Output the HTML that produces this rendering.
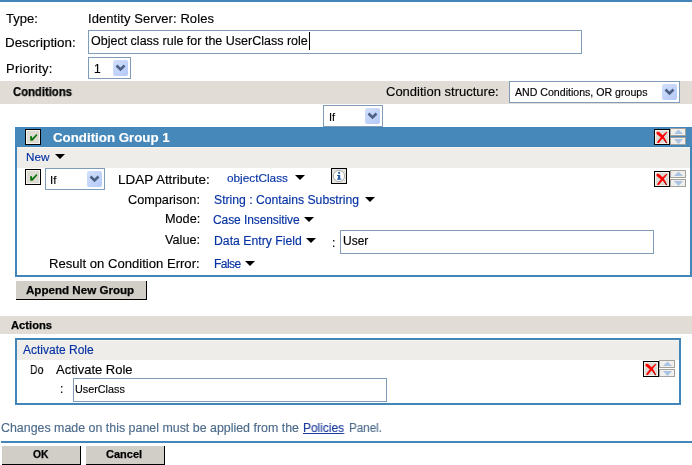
<!DOCTYPE html>
<html><head><meta charset="utf-8"><style>
html,body{margin:0;padding:0;}
body{width:692px;height:465px;overflow:hidden;position:relative;background:#fff;font-family:"Liberation Sans",sans-serif;}
.t{position:absolute;line-height:1;white-space:pre;font-family:"Liberation Sans",sans-serif;will-change:transform;-webkit-text-stroke:0.15px currentColor;}
svg{display:block}
</style></head><body>
<div style="position:absolute;left:0px;top:0px;width:692px;height:2px;box-sizing:border-box;background:#4486b9"></div>
<div class="t" style="left:6px;top:12px;font-size:13px;font-weight:normal;color:#000;">Type:</div>
<div class="t" style="left:88px;top:12px;font-size:13px;font-weight:normal;color:#000;letter-spacing:0.08px">Identity Server: Roles</div>
<div class="t" style="left:5px;top:36px;font-size:13px;font-weight:normal;color:#000;transform:scaleX(1.03);transform-origin:left top;">Description:</div>
<div style="position:absolute;left:88px;top:30px;width:494px;height:24px;box-sizing:border-box;border:1px solid #7f9db9;background:#fff"></div>
<div class="t" style="left:91px;top:35px;font-size:12.5px;font-weight:normal;color:#000;">Object class rule for the UserClass role</div>
<div style="position:absolute;left:309px;top:32px;width:1px;height:18px;box-sizing:border-box;background:#000"></div>
<div class="t" style="left:6px;top:62px;font-size:13px;font-weight:normal;color:#000;letter-spacing:0.3px">Priority:</div>
<div style="position:absolute;left:88px;top:57px;width:43px;height:22px;box-sizing:border-box;border:1px solid #7f9db9;background:#fff"></div>
<div class="t" style="left:94px;top:63px;font-size:12px;font-weight:normal;color:#000;">1</div>
<svg style="position:absolute;left:113px;top:60px" width="15" height="16" viewBox="0 0 15 16"><defs><linearGradient id="g11360" x1="0" y1="0" x2="1" y2="1"><stop offset="0" stop-color="#d3e0fd"/><stop offset="1" stop-color="#b3c9f7"/></linearGradient></defs><rect x="0" y="0" width="15" height="16" rx="2" fill="url(#g11360)"/><path d="M3.5 5.5L7.5 9.5L11.5 5.5" fill="none" stroke="#4d6185" stroke-width="2.6"/></svg>
<div style="position:absolute;left:0px;top:81px;width:692px;height:23px;box-sizing:border-box;background:#e1ddd6"></div>
<div class="t" style="left:13px;top:86px;font-size:12px;font-weight:bold;color:#000;-webkit-text-stroke:0.25px #000;transform:scaleX(0.94);transform-origin:left top;">Conditions</div>
<div class="t" style="left:386px;top:85px;font-size:13px;font-weight:normal;color:#000;">Condition structure:</div>
<div style="position:absolute;left:509px;top:81px;width:171px;height:22px;box-sizing:border-box;border:1px solid #7f9db9;background:#fff"></div>
<div class="t" style="left:515px;top:87px;font-size:10.6px;font-weight:normal;color:#000;">AND Conditions, OR groups</div>
<svg style="position:absolute;left:662px;top:84px" width="15" height="16" viewBox="0 0 15 16"><defs><linearGradient id="g66284" x1="0" y1="0" x2="1" y2="1"><stop offset="0" stop-color="#d3e0fd"/><stop offset="1" stop-color="#b3c9f7"/></linearGradient></defs><rect x="0" y="0" width="15" height="16" rx="2" fill="url(#g66284)"/><path d="M3.5 5.5L7.5 9.5L11.5 5.5" fill="none" stroke="#4d6185" stroke-width="2.6"/></svg>
<div style="position:absolute;left:323px;top:105px;width:60px;height:22px;box-sizing:border-box;border:1px solid #7f9db9;background:#fff"></div>
<div class="t" style="left:329px;top:112px;font-size:11px;font-weight:normal;color:#000;">If</div>
<svg style="position:absolute;left:365px;top:108px" width="15" height="16" viewBox="0 0 15 16"><defs><linearGradient id="g365108" x1="0" y1="0" x2="1" y2="1"><stop offset="0" stop-color="#d3e0fd"/><stop offset="1" stop-color="#b3c9f7"/></linearGradient></defs><rect x="0" y="0" width="15" height="16" rx="2" fill="url(#g365108)"/><path d="M3.5 5.5L7.5 9.5L11.5 5.5" fill="none" stroke="#4d6185" stroke-width="2.6"/></svg>
<div style="position:absolute;left:15px;top:127px;width:677px;height:150px;box-sizing:border-box;border:2px solid #4285b8;border-top:0"></div>
<div style="position:absolute;left:15px;top:127px;width:677px;height:20px;box-sizing:border-box;background:#4688ba"></div>
<div style="position:absolute;left:15px;top:127px;width:677px;height:1px;box-sizing:border-box;background:#4285b8"></div>
<div style="position:absolute;left:15px;top:146px;width:677px;height:1px;box-sizing:border-box;background:#4285b8"></div>
<svg style="position:absolute;left:25px;top:129px" width="16" height="16" viewBox="0 0 16 16"><rect x="0.5" y="0.5" width="15" height="15" fill="#dedbd3" stroke="#000"/><rect x="1.5" y="1.5" width="13" height="13" fill="none" stroke="#f6f3ec" stroke-width="1"/><path d="M5 7.2H7.1V9.4L11.2 5.2L12.2 5.4V6.6L7.6 11.8H5.4Z" fill="#0a720a"/></svg>
<div class="t" style="left:53px;top:131px;font-size:13.3px;font-weight:bold;color:#fff;">Condition Group 1</div>
<svg style="position:absolute;left:654px;top:129px" width="16" height="16" viewBox="0 0 16 16"><rect x="0.5" y="0.5" width="15" height="15" fill="#dcdad4" stroke="#000"/><rect x="1.5" y="1.5" width="13" height="13" fill="none" stroke="#f6f3ec" stroke-width="1"/><path d="M2.4 4.3C2.3 3.2 3.4 2.6 4.6 2.9C6 3.3 7.5 5 9 6.8C10.6 8.8 12 11 13.1 13.9L12.3 14.2C10.8 12 9 10.2 7.2 8.6C5.6 7.2 2.6 5.6 2.4 4.3Z" fill="#f00"/><path d="M13.4 3.2L12.7 2.7C10.5 4.2 8.2 6.6 6.4 8.8C4.8 10.7 3.4 12.4 3.2 13.6C3.3 14.3 4.6 14.3 5.3 13.6C7 11.2 9.2 8.4 10.8 6.4C11.8 5.2 12.8 4.1 13.4 3.2Z" fill="#f00"/><path d="M10.6 11.2C11.4 12.2 12.1 13.2 12.6 14.2" fill="none" stroke="#7a0000" stroke-width="0.8"/></svg>
<svg style="position:absolute;left:670px;top:128px" width="16" height="17" viewBox="0 0 16 17"><rect x="0.5" y="0.5" width="15" height="7" fill="#f0efeb" stroke="#a3a19c"/><path d="M4 6H13L8.5 1.5Z" fill="#a9c3e4"/><rect x="0.5" y="9.5" width="15" height="7" fill="#f0efeb" stroke="#a3a19c"/><path d="M4 11H13L8.5 16Z" fill="#a9c3e4"/></svg>
<div style="position:absolute;left:17px;top:147px;width:673px;height:21px;box-sizing:border-box;background:#eeedea"></div>
<div style="position:absolute;left:17px;top:147px;width:673px;height:1px;box-sizing:border-box;background:#f8f5ee"></div>
<div class="t" style="left:26px;top:151px;font-size:11.7px;font-weight:normal;color:#0633a3;">New</div>
<svg style="position:absolute;left:55px;top:154px" width="10" height="5"><path d="M0 0H10L5.0 5Z" fill="#000"/></svg>
<svg style="position:absolute;left:25px;top:169px" width="16" height="16" viewBox="0 0 16 16"><rect x="0.5" y="0.5" width="15" height="15" fill="#dedbd3" stroke="#000"/><rect x="1.5" y="1.5" width="13" height="13" fill="none" stroke="#f6f3ec" stroke-width="1"/><path d="M5 7.2H7.1V9.4L11.2 5.2L12.2 5.4V6.6L7.6 11.8H5.4Z" fill="#0a720a"/></svg>
<div style="position:absolute;left:45px;top:168px;width:60px;height:22px;box-sizing:border-box;border:1px solid #7f9db9;background:#fff"></div>
<div class="t" style="left:50px;top:175px;font-size:11.5px;font-weight:normal;color:#000;">If</div>
<svg style="position:absolute;left:87px;top:171px" width="15" height="16" viewBox="0 0 15 16"><defs><linearGradient id="g87171" x1="0" y1="0" x2="1" y2="1"><stop offset="0" stop-color="#d3e0fd"/><stop offset="1" stop-color="#b3c9f7"/></linearGradient></defs><rect x="0" y="0" width="15" height="16" rx="2" fill="url(#g87171)"/><path d="M3.5 5.5L7.5 9.5L11.5 5.5" fill="none" stroke="#4d6185" stroke-width="2.6"/></svg>
<div class="t" style="left:118px;top:173px;font-size:13px;font-weight:normal;color:#000;transform:scaleX(1.035);transform-origin:left top;">LDAP Attribute:</div>
<div class="t" style="left:227px;top:173px;font-size:11.8px;font-weight:normal;color:#0633a3;">objectClass</div>
<svg style="position:absolute;left:295px;top:175px" width="10" height="5"><path d="M0 0H10L5.0 5Z" fill="#000"/></svg>
<svg style="position:absolute;left:331px;top:168px" width="16" height="16" viewBox="0 0 16 16"><rect x="0.5" y="0.5" width="15" height="15" fill="#e6e4de" stroke="#000"/><circle cx="8" cy="8" r="5.6" fill="#fff" stroke="#9a9a9a" stroke-width="0.8"/><rect x="7" y="7" width="2.2" height="4.3" fill="#2a62a8"/><rect x="6" y="7" width="1.2" height="1" fill="#2a62a8"/><rect x="6" y="10.6" width="4.2" height="1.1" fill="#2a62a8"/><circle cx="8.1" cy="4.9" r="1.1" fill="#2a62a8"/></svg>
<svg style="position:absolute;left:654px;top:171px" width="16" height="16" viewBox="0 0 16 16"><rect x="0.5" y="0.5" width="15" height="15" fill="#dcdad4" stroke="#000"/><rect x="1.5" y="1.5" width="13" height="13" fill="none" stroke="#f6f3ec" stroke-width="1"/><path d="M2.4 4.3C2.3 3.2 3.4 2.6 4.6 2.9C6 3.3 7.5 5 9 6.8C10.6 8.8 12 11 13.1 13.9L12.3 14.2C10.8 12 9 10.2 7.2 8.6C5.6 7.2 2.6 5.6 2.4 4.3Z" fill="#f00"/><path d="M13.4 3.2L12.7 2.7C10.5 4.2 8.2 6.6 6.4 8.8C4.8 10.7 3.4 12.4 3.2 13.6C3.3 14.3 4.6 14.3 5.3 13.6C7 11.2 9.2 8.4 10.8 6.4C11.8 5.2 12.8 4.1 13.4 3.2Z" fill="#f00"/><path d="M10.6 11.2C11.4 12.2 12.1 13.2 12.6 14.2" fill="none" stroke="#7a0000" stroke-width="0.8"/></svg>
<svg style="position:absolute;left:670px;top:170px" width="16" height="17" viewBox="0 0 16 17"><rect x="0.5" y="0.5" width="15" height="7" fill="#f0efeb" stroke="#a3a19c"/><path d="M4 6H13L8.5 1.5Z" fill="#a9c3e4"/><rect x="0.5" y="9.5" width="15" height="7" fill="#f0efeb" stroke="#a3a19c"/><path d="M4 11H13L8.5 16Z" fill="#a9c3e4"/></svg>
<div class="t" style="right:492px;top:194px;font-size:12.7px;font-weight:normal;color:#000;">Comparison:</div>
<div class="t" style="left:214px;top:194px;font-size:12.2px;font-weight:normal;color:#0633a3;">String : Contains Substring</div>
<svg style="position:absolute;left:365px;top:197px" width="10" height="5"><path d="M0 0H10L5.0 5Z" fill="#000"/></svg>
<div class="t" style="right:492px;top:213px;font-size:12.7px;font-weight:normal;color:#000;">Mode:</div>
<div class="t" style="left:213px;top:214px;font-size:12px;font-weight:normal;color:#0633a3;letter-spacing:-0.09px">Case Insensitive</div>
<svg style="position:absolute;left:304px;top:217px" width="10" height="5"><path d="M0 0H10L5.0 5Z" fill="#000"/></svg>
<div class="t" style="right:492px;top:234px;font-size:12.7px;font-weight:normal;color:#000;">Value:</div>
<div class="t" style="left:214px;top:235px;font-size:12px;font-weight:normal;color:#0633a3;transform:scaleX(1.02);transform-origin:left top;">Data Entry Field</div>
<svg style="position:absolute;left:306px;top:238px" width="10" height="5"><path d="M0 0H10L5.0 5Z" fill="#000"/></svg>
<div class="t" style="left:332px;top:237px;font-size:12px;font-weight:normal;color:#000;">:</div>
<div style="position:absolute;left:340px;top:230px;width:314px;height:24px;box-sizing:border-box;border:1px solid #7f9db9;background:#fff"></div>
<div class="t" style="left:343px;top:235px;font-size:12px;font-weight:normal;color:#000;">User</div>
<div class="t" style="right:492px;top:257px;font-size:13.1px;font-weight:normal;color:#000;">Result on Condition Error:</div>
<div class="t" style="left:214px;top:258px;font-size:12px;font-weight:normal;color:#0633a3;letter-spacing:-0.55px">False</div>
<svg style="position:absolute;left:245px;top:261px" width="10" height="5"><path d="M0 0H10L5.0 5Z" fill="#000"/></svg>
<div style="position:absolute;left:16px;top:281px;width:131px;height:19px;box-sizing:border-box;background:#d1cec7;border-right:1px solid #000;border-bottom:1px solid #000"></div>
<div class="t" style="left:26px;top:284px;font-size:11.6px;font-weight:bold;color:#000;-webkit-text-stroke:0.25px #000;">Append New Group</div>
<div style="position:absolute;left:0px;top:316px;width:692px;height:18px;box-sizing:border-box;background:#e1ddd6"></div>
<div class="t" style="left:11px;top:320px;font-size:11.2px;font-weight:bold;color:#000;-webkit-text-stroke:0.25px #000;">Actions</div>
<div style="position:absolute;left:15px;top:338px;width:666px;height:67px;box-sizing:border-box;border:2px solid #4285b8"></div>
<div style="position:absolute;left:17px;top:340px;width:662px;height:20px;box-sizing:border-box;background:#eeedea"></div>
<div style="position:absolute;left:17px;top:340px;width:662px;height:1px;box-sizing:border-box;background:#f8f5ee"></div>
<div class="t" style="left:23px;top:344px;font-size:12px;font-weight:normal;color:#0633a3;">Activate Role</div>
<div class="t" style="left:30px;top:363px;font-size:13px;font-weight:normal;color:#000;transform:scaleX(0.8);transform-origin:left top;">Do</div>
<div class="t" style="left:56px;top:363px;font-size:13px;font-weight:normal;color:#000;">Activate Role</div>
<svg style="position:absolute;left:643px;top:361px" width="16" height="16" viewBox="0 0 16 16"><rect x="0.5" y="0.5" width="15" height="15" fill="#dcdad4" stroke="#000"/><rect x="1.5" y="1.5" width="13" height="13" fill="none" stroke="#f6f3ec" stroke-width="1"/><path d="M2.4 4.3C2.3 3.2 3.4 2.6 4.6 2.9C6 3.3 7.5 5 9 6.8C10.6 8.8 12 11 13.1 13.9L12.3 14.2C10.8 12 9 10.2 7.2 8.6C5.6 7.2 2.6 5.6 2.4 4.3Z" fill="#f00"/><path d="M13.4 3.2L12.7 2.7C10.5 4.2 8.2 6.6 6.4 8.8C4.8 10.7 3.4 12.4 3.2 13.6C3.3 14.3 4.6 14.3 5.3 13.6C7 11.2 9.2 8.4 10.8 6.4C11.8 5.2 12.8 4.1 13.4 3.2Z" fill="#f00"/><path d="M10.6 11.2C11.4 12.2 12.1 13.2 12.6 14.2" fill="none" stroke="#7a0000" stroke-width="0.8"/></svg>
<svg style="position:absolute;left:659px;top:360px" width="16" height="17" viewBox="0 0 16 17"><rect x="0.5" y="0.5" width="15" height="7" fill="#f0efeb" stroke="#a3a19c"/><path d="M4 6H13L8.5 1.5Z" fill="#a9c3e4"/><rect x="0.5" y="9.5" width="15" height="7" fill="#f0efeb" stroke="#a3a19c"/><path d="M4 11H13L8.5 16Z" fill="#a9c3e4"/></svg>
<div class="t" style="left:60px;top:383px;font-size:12px;font-weight:normal;color:#000;">:</div>
<div style="position:absolute;left:73px;top:378px;width:314px;height:24px;box-sizing:border-box;border:1px solid #7f9db9;background:#fff"></div>
<div class="t" style="left:75px;top:384px;font-size:10.8px;font-weight:normal;color:#000;">UserClass</div>
<div class="t" style="left:1px;top:422px;font-size:12.3px;font-weight:normal;color:#4d6b8b;transform:scaleX(1.009);transform-origin:left top;">Changes made on this panel must be applied from the</div>
<div class="t" style="left:303px;top:422px;font-size:12.3px;font-weight:normal;color:#1c3c9c;transform:scaleX(0.967);transform-origin:left top;"><span style="text-decoration:underline">Policies</span></div>
<div class="t" style="left:349px;top:422px;font-size:12.3px;font-weight:normal;color:#4d6b8b;transform:scaleX(0.945);transform-origin:left top;">Panel.</div>
<div style="position:absolute;left:1px;top:441px;width:691px;height:2px;box-sizing:border-box;background:#4486b9"></div>
<div style="position:absolute;left:2px;top:446px;width:79px;height:19px;box-sizing:border-box;background:#d1cec7;border-right:1px solid #000;border-bottom:1px solid #000"></div>
<div class="t" style="left:33px;top:450px;font-size:10.3px;font-weight:bold;color:#000;-webkit-text-stroke:0.25px #000;">OK</div>
<div style="position:absolute;left:86px;top:446px;width:79px;height:19px;box-sizing:border-box;background:#d1cec7;border-right:1px solid #000;border-bottom:1px solid #000"></div>
<div class="t" style="left:106px;top:449px;font-size:11px;font-weight:bold;color:#000;-webkit-text-stroke:0.25px #000;">Cancel</div>
</body></html>
